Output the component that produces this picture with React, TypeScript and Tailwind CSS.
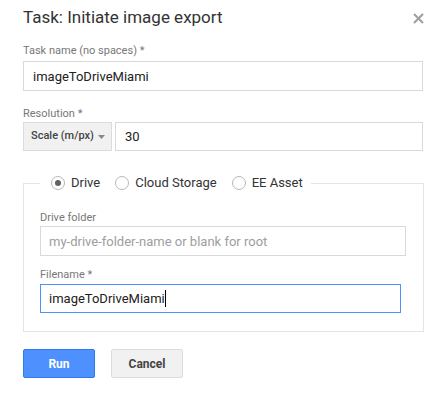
import React from 'react';

const Radio: React.FC<{ label: string; checked?: boolean }> = ({ label, checked }) => (
  <label className="flex items-center gap-[6px] text-[13px] text-[#333]">
    <span className="w-[14px] h-[14px] rounded-full border border-[#b8b8b8] bg-white flex items-center justify-center">
      {checked && <span className="w-[6px] h-[6px] rounded-full bg-[#616161]"></span>}
    </span>
    {label}
  </label>
);

export default function App() {
  return (
    <div className="w-[438px] h-[398px] bg-white pl-[23px] pr-[15px] font-['Roboto',sans-serif]">
      <div className="h-[36px] flex items-center justify-between">
        <h2 className="text-[17px] text-[#333]">Task: Initiate image export</h2>
        <button className="mr-[-1px] p-0">
          <svg width="11" height="11" viewBox="0 0 11 11">
            <path d="M1 1 L10 10 M10 1 L1 10" stroke="#9e9e9e" strokeWidth="2" />
          </svg>
        </button>
      </div>

      <div className="mt-[8px] text-[11px] leading-[14px] text-[#777]">Task name (no spaces) *</div>
      <input
        className="mt-[3px] w-full h-[30px] border border-[#d9d9d9] px-[9px] text-[13px] text-[#212121] outline-none"
        defaultValue="imageToDriveMiami"
      />

      <div className="mt-[16px] text-[11px] leading-[14px] text-[#777]">Resolution *</div>
      <div className="mt-[1px] flex gap-[3px] h-[29px]">
        <div className="w-[89px] whitespace-nowrap flex items-center justify-between pl-[7px] pr-[6px] bg-[#f1f1f1] border border-[#dcdcdc] text-[11px] font-medium text-[#444]">
          Scale (m/px)
          <svg width="7" height="4" viewBox="0 0 7 4">
            <path d="M0 0 L7 0 L3.5 4 Z" fill="#888" />
          </svg>
        </div>
        <input
          className="flex-1 border border-[#d9d9d9] px-[9px] text-[13px] text-[#212121] outline-none"
          defaultValue="30"
        />
      </div>

      <fieldset className="mt-[24px] border border-[#e5e5e5] pl-[16px] pr-[17px] pb-[18px]">
        <legend className="pl-[11px] pr-[8px] flex items-center gap-[15px] h-[16px]">
          <Radio label="Drive" checked />
          <Radio label="Cloud Storage" />
          <Radio label="EE Asset" />
        </legend>
        <div className="mt-[20px] text-[11px] leading-[14px] text-[#777]">Drive folder</div>
        <input
          className="mt-[1px] w-[366px] h-[30px] border border-[#d9d9d9] px-[8px] text-[13px] text-[#212121] placeholder:text-[#9e9e9e] outline-none"
          placeholder="my-drive-folder-name or blank for root"
        />
        <div className="mt-[12px] text-[11px] leading-[14px] text-[#777]">Filename *</div>
        <div className="mt-[2px] w-[361px] h-[29px] border border-[#4d90fe] px-[8px] flex items-center text-[13px] text-[#212121]">
          imageToDriveMiami
          <span className="w-[1px] h-[17px] bg-black"></span>
        </div>
      </fieldset>

      <div className="mt-[17px] flex gap-[16px]">
        <button className="w-[72px] h-[29px] rounded-[2px] bg-[#4d90fe] border border-[#3079ed] text-white text-[12px] font-bold">
          Run
        </button>
        <button className="w-[72px] h-[29px] rounded-[2px] bg-[#f1f1f1] border border-[#dcdcdc] text-[#444] text-[12px] font-bold">
          Cancel
        </button>
      </div>
    </div>
  );
}
